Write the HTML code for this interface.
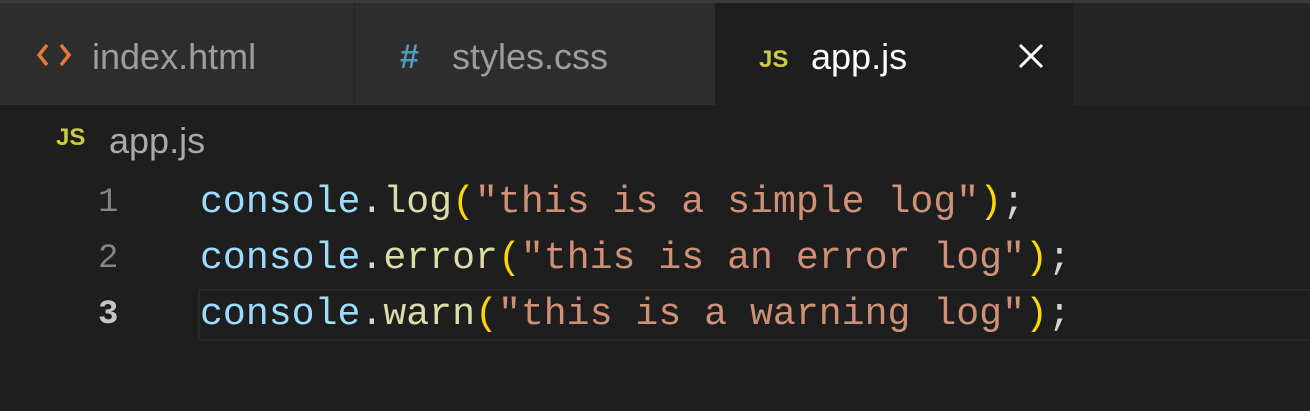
<!DOCTYPE html>
<html><head><style>
body{margin:0;width:1310px;height:411px;background:#1e1e1e;overflow:hidden;position:relative;font-family:"Liberation Sans",sans-serif}
.top{position:absolute;left:0;top:0;width:1310px;height:3px;background:#3a3a3a}
.bar{position:absolute;left:0;top:3px;width:1310px;height:102px;background:#252526}
.tab{position:absolute;top:3px;height:102px;background:#2d2d2d;color:#9d9d9d;font-size:36px}
.tab span{position:absolute;top:34px;line-height:40px}
.ic{font-weight:bold}
.code{position:absolute;font-family:"Liberation Mono",monospace;font-size:38.2px;line-height:56px;white-space:pre}
.b{color:#9cdcfe}.f{color:#dcdcaa}.s{color:#ce9178}.p{color:#ffd700}.w{color:#d4d4d4}
.ln{position:absolute;left:98px;font-family:"Liberation Mono",monospace;font-size:34px;line-height:56px;color:#858585}
</style></head><body>
<div class="top"></div><div class="bar"></div>
<div class="tab" style="left:0;width:354px">
<svg style="position:absolute;left:36px;top:38px" width="36" height="28" viewBox="0 0 36 28"><path d="M11 4 L3 14 L11 24 M25 4 L33 14 L25 24" stroke="#e37933" stroke-width="3.5" fill="none"/></svg>
<span style="left:92px">index.html</span></div>
<div style="position:absolute;left:354px;top:3px;width:1px;height:102px;background:#252526"></div>
<div class="tab" style="left:355px;width:360px"><span style="left:45px;color:#519aba;font-size:34px" class="ic">#</span><span style="left:97px">styles.css</span></div>
<div class="tab" style="left:715px;width:358px;background:#1e1e1e;color:#fff"><span style="left:44px;color:#cbcb41;font-size:24px;top:37px" class="ic">JS</span><span style="left:96px">app.js</span>
<svg style="position:absolute;left:303px;top:40px" width="26" height="26" viewBox="0 0 26 26"><path d="M2 2 L24 24 M24 2 L2 24" stroke="#fff" stroke-width="3"/></svg></div>
<div style="position:absolute;left:56px;top:124px;color:#cbcb41;font-size:24px;font-weight:bold">JS</div>
<div style="position:absolute;left:109px;top:120px;color:#a9a9a9;font-size:36px">app.js</div>
<div style="position:absolute;left:198px;top:289px;width:1112px;height:52px;border:2px solid #282828;border-right:none;box-sizing:border-box"></div>
<div class="ln" style="top:175px">1</div>
<div class="ln" style="top:231px">2</div>
<div class="ln" style="top:287px;color:#c6c6c6;font-weight:bold">3</div>
<div class="code" style="left:200px;top:175px"><span class="b">console</span><span class="w">.</span><span class="f">log</span><span class="p">(</span><span class="s">"this is a simple log"</span><span class="p">)</span><span class="w">;</span></div>
<div class="code" style="left:200px;top:231px"><span class="b">console</span><span class="w">.</span><span class="f">error</span><span class="p">(</span><span class="s">"this is an error log"</span><span class="p">)</span><span class="w">;</span></div>
<div class="code" style="left:200px;top:287px"><span class="b">console</span><span class="w">.</span><span class="f">warn</span><span class="p">(</span><span class="s">"this is a warning log"</span><span class="p">)</span><span class="w">;</span></div>
</body></html>
